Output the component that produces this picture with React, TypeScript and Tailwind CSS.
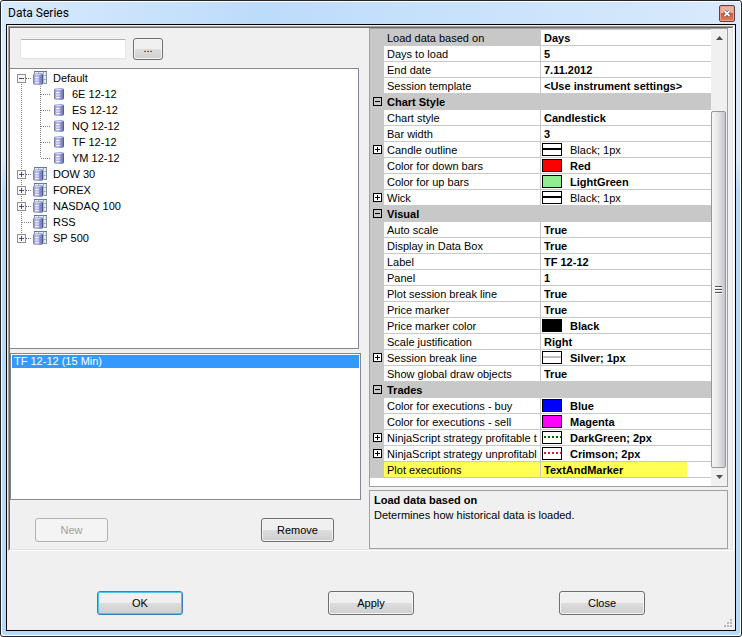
import React from "react";

type Swatch = { fill?: string; line?: string; dotted?: boolean };
type Property = {
  name: string;
  value?: string;
  category?: boolean;
  expandable?: boolean;
  plain?: boolean;
  selected?: boolean;
  highlighted?: boolean;
  swatch?: Swatch;
};

const properties: Property[] = [
  { name: "Load data based on", value: "Days", selected: true },
  { name: "Days to load", value: "5" },
  { name: "End date", value: "7.11.2012" },
  { name: "Session template", value: "<Use instrument settings>" },
  { name: "Chart Style", category: true },
  { name: "Chart style", value: "Candlestick" },
  { name: "Bar width", value: "3" },
  { name: "Candle outline", value: "Black; 1px", expandable: true, plain: true, swatch: { line: "#000000" } },
  { name: "Color for down bars", value: "Red", swatch: { fill: "#ff0000" } },
  { name: "Color for up bars", value: "LightGreen", swatch: { fill: "#90ee90" } },
  { name: "Wick", value: "Black; 1px", expandable: true, plain: true, swatch: { line: "#000000" } },
  { name: "Visual", category: true },
  { name: "Auto scale", value: "True" },
  { name: "Display in Data Box", value: "True" },
  { name: "Label", value: "TF 12-12" },
  { name: "Panel", value: "1" },
  { name: "Plot session break line", value: "True" },
  { name: "Price marker", value: "True" },
  { name: "Price marker color", value: "Black", swatch: { fill: "#000000" } },
  { name: "Scale justification", value: "Right" },
  { name: "Session break line", value: "Silver; 1px", expandable: true, swatch: { line: "#c0c0c0" } },
  { name: "Show global draw objects", value: "True" },
  { name: "Trades", category: true },
  { name: "Color for executions - buy", value: "Blue", swatch: { fill: "#0000ff" } },
  { name: "Color for executions - sell", value: "Magenta", swatch: { fill: "#ff00ff" } },
  { name: "NinjaScript strategy profitable t", value: "DarkGreen; 2px", expandable: true, swatch: { line: "#006400", dotted: true } },
  { name: "NinjaScript strategy unprofitabl", value: "Crimson; 2px", expandable: true, swatch: { line: "#dc143c", dotted: true } },
  { name: "Plot executions", value: "TextAndMarker", highlighted: true },
];

type Node = { name: string; children?: string[]; leaf?: boolean };

const tree: Node[] = [
  { name: "Default", children: ["6E 12-12", "ES 12-12", "NQ 12-12", "TF 12-12", "YM 12-12"] },
  { name: "DOW 30" },
  { name: "FOREX" },
  { name: "NASDAQ 100" },
  { name: "RSS", leaf: true },
  { name: "SP 500" },
];

function SwatchIcon({ fill = "#ffffff", line, dotted }: Swatch) {
  return (
    <svg width="20" height="13" className="block shrink-0" shapeRendering="crispEdges" aria-hidden="true">
      <rect x="0.5" y="0.5" width="19" height="12" fill={fill} stroke="#000" />
      {line && (
        <path d={dotted ? "M2 6H19" : "M1 6H19"} stroke={line} strokeWidth="2" strokeDasharray={dotted ? "2 2" : undefined} />
      )}
    </svg>
  );
}

function GridToggle({ open, label }: { open: boolean; label: string }) {
  return (
    <button type="button" aria-label={(open ? "Collapse " : "Expand ") + label} className="mx-auto block pb-[2px]">
      <svg width="9" height="9" className="block" shapeRendering="crispEdges">
        <rect x="0.5" y="0.5" width="8" height="8" fill={open ? "#c8c8c8" : "#fff"} stroke="#000" />
        <path d={open ? "M2 4.5H7" : "M2 4.5H7M4.5 2V7"} stroke="#000" />
      </svg>
    </button>
  );
}

function InstrumentIcon() {
  return (
    <svg width="10" height="12" className="block shrink-0" aria-hidden="true">
      <path d="M0 1.5Q0 0 5 0T10 1.5V10.5Q10 12 5 12T0 10.5Z" fill="url(#steel)" />
      <path d="M1 1.5Q5 0.5 9 1.5Q5 3 1 1.5Z" fill="#d5daf2" />
      <path d="M2 4.5H6M2 7H6M2 9.5H6" stroke="#f0f2ff" />
      <path d="M0.5 2V10.5" stroke="#7b7fb4" />
      <path d="M9.5 2V10.5" stroke="#575a94" />
    </svg>
  );
}

function GroupIcon() {
  return (
    <svg width="14" height="14" className="block shrink-0" aria-hidden="true">
      <rect x="1.5" y="0.5" width="12" height="12" fill="#dcecf8" stroke="#8a929e" />
      <path d="M1 0.5H14" stroke="#6f7782" />
      <path d="M10.5 1V13M10 4.5H13M10 8.5H13M5.5 1V3" stroke="#a3b3c4" />
      <g transform="translate(0 2)">
        <path d="M0 1.5Q0 0 5 0T10 1.5V10.5Q10 12 5 12T0 10.5Z" fill="url(#steel)" />
        <path d="M1 1.5Q5 0.5 9 1.5Q5 3 1 1.5Z" fill="#d5daf2" />
        <path d="M2 4.5H6M2 7H6M2 9.5H6" stroke="#f0f2ff" />
        <path d="M0.5 2V10.5" stroke="#7b7fb4" />
        <path d="M9.5 2V10.5" stroke="#575a94" />
      </g>
    </svg>
  );
}

function Branch({ up, down, box }: { up: boolean; down: boolean; box?: "plus" | "minus" }) {
  return (
    <svg width="16" height="16" className="block shrink-0" shapeRendering="crispEdges" aria-hidden="true">
      <g stroke="#808080" strokeDasharray="1 1">
        {up && <path d="M4.5 0V8" />}
        {down && <path d="M4.5 8V16" />}
        <path d="M5 8.5H15" />
      </g>
      {box && (
        <>
          <rect x="0.5" y="4.5" width="8" height="8" fill="#f6f6f6" stroke="#919191" />
          <path d={box === "plus" ? "M2 8.5H7M4.5 6V11" : "M2 8.5H7"} stroke="#35509c" />
        </>
      )}
    </svg>
  );
}

function PushButton({ children, className = "", disabled, primary }: { children: React.ReactNode; className?: string; disabled?: boolean; primary?: boolean }) {
  const tone = disabled
    ? "border-[#adb2b5] bg-[#f4f4f4] text-[#a0a0a0]"
    : primary
      ? "border-[#3c7fb1] bg-linear-to-b from-[#f0f0f0] from-50% via-[#dddddd] via-50% to-[#cfcfcf] text-black shadow-[inset_0_0_0_1px_#46c8f0]"
      : "border-[#707070] bg-linear-to-b from-[#f0f0f0] from-50% via-[#dddddd] via-50% to-[#cfcfcf] text-black shadow-[inset_0_0_0_1px_#f4f4f4]";
  return (
    <button type="button" disabled={disabled} className={`flex items-center justify-center rounded-[3px] border ${tone} ${className}`}>
      {children}
    </button>
  );
}

function InstrumentTree() {
  return (
    <ul role="tree" aria-label="Instruments" className="mr-[2px] min-h-[281px] flex-1 border-y border-r border-[#828790] bg-white pt-px pl-[7px] leading-4">
      {tree.map((node, i) => (
        <li key={node.name} role="treeitem" aria-expanded={node.leaf ? undefined : !!node.children}>
          <div className="flex h-4 items-center">
            <Branch up={i > 0} down={i < tree.length - 1} box={node.leaf ? undefined : node.children ? "minus" : "plus"} />
            <GroupIcon />
            <span className="pl-[6px]">{node.name}</span>
          </div>
          {node.children && (
            <ul role="group">
              {node.children.map((child, j) => (
                <li key={child} role="treeitem" className="flex h-4 items-center">
                  <svg width="19" height="16" className="block shrink-0" shapeRendering="crispEdges" aria-hidden="true">
                    <path d="M4.5 0V16" stroke="#808080" strokeDasharray="1 1" />
                  </svg>
                  <Branch up down={j < node.children!.length - 1} />
                  <span className="pl-[2px]"><InstrumentIcon /></span>
                  <span className="pl-2">{child}</span>
                </li>
              ))}
            </ul>
          )}
        </li>
      ))}
    </ul>
  );
}

function PropertyRow({ p }: { p: Property }) {
  if (p.category) {
    return (
      <tr className="h-4 bg-[#c8c8c8]">
        <td className="p-0"><GridToggle open label={p.name} /></td>
        <th colSpan={2} className="p-0 pl-[3px] text-left font-bold">{p.name}</th>
      </tr>
    );
  }
  const labelTone = p.selected ? "bg-[#c8c8c8]" : p.highlighted ? "bg-[#ffff54]" : "bg-white";
  return (
    <tr className="h-4">
      <td className="bg-[#c8c8c8] p-0">{p.expandable && <GridToggle open={false} label={p.name} />}</td>
      <th className={`border-r border-b border-[#c8c8c8] p-0 pl-[3px] text-left font-normal whitespace-nowrap ${labelTone}`}>
        <div className="h-[15px] pt-px">{p.name}</div>
      </th>
      <td className="border-b border-[#c8c8c8] bg-white p-0">
        <div className={`flex h-[15px] items-center whitespace-nowrap ${p.plain ? "" : "font-bold"} ${p.swatch ? "gap-2 pl-px" : "pl-[3px]"} ${p.highlighted ? "w-[146px] bg-[#ffff54]" : ""}`}>
          {p.swatch && <SwatchIcon {...p.swatch} />}
          <span className="h-[15px] pt-px">{p.value}</span>
        </div>
      </td>
    </tr>
  );
}

function ScrollBar() {
  return (
    <div className="flex w-4 shrink-0 flex-col bg-[#f0f0f0]">
      <button type="button" aria-label="Scroll up" className="flex h-[17px] items-center justify-center">
        <svg width="7" height="4"><path d="M0 4L3.5 0L7 4Z" fill="#505050" /></svg>
      </button>
      <div className="flex flex-1 flex-col pt-[65px]">
        <div className="mr-px flex flex-1 items-center justify-center rounded-[2px] border border-[#979797] bg-linear-to-r from-[#f6f6f6] via-[#e4e4e6] to-[#c4c4ca]">
          <svg width="7" height="8" shapeRendering="crispEdges"><path d="M0 0.5H7M0 3.5H7M0 6.5H7" stroke="#505050" /><path d="M0 1.5H7M0 4.5H7M0 7.5H7" stroke="#fff" /></svg>
        </div>
      </div>
      <button type="button" aria-label="Scroll down" className="flex h-[18px] items-center justify-center">
        <svg width="7" height="4"><path d="M0 0L3.5 4L7 0Z" fill="#505050" /></svg>
      </button>
    </div>
  );
}

export default function App() {
  return (
    <main className="flex min-h-screen w-full flex-col rounded-[3px] border border-[#20242c] bg-white p-px font-['Liberation_Sans',Arial,sans-serif] text-[11px] leading-[15px] text-black">
      <svg width="0" height="0" className="absolute" aria-hidden="true">
        <linearGradient id="steel">
          <stop offset="0" stopColor="#8f93c8" />
          <stop offset="0.35" stopColor="#b9bee4" />
          <stop offset="1" stopColor="#6a6db0" />
        </linearGradient>
      </svg>
      <div className="flex flex-1 flex-col rounded-[3px] bg-linear-to-b from-[#d8eafb] from-25% to-[#b9d9f8] to-30% px-1 pb-1">
        <header className="-mx-1 flex h-[22px] shrink-0 items-center justify-between rounded-t-[3px] bg-linear-to-r from-[#d9eafb] via-[#bcdcfb] via-35% to-[#d9eafb] pr-[5px] pl-[6px]">
          <h1 className="font-[Roboto,'Liberation_Sans',sans-serif] text-[12px]">Data Series</h1>
          <button type="button" aria-label="Close window" className="flex h-[17px] w-4 items-center justify-center rounded-[2px] border border-[#6b3a3a] bg-linear-to-b from-[#eab0a0] from-45% via-[#cd5a42] via-50% to-[#d5805f] shadow-[inset_0_0_0_1px_#e8a08c]">
            <svg width="8" height="7"><path d="M1.5 1L6.5 6M6.5 1L1.5 6" stroke="#4a3a44" strokeWidth="3" /><path d="M1.5 1L6.5 6M6.5 1L1.5 6" stroke="#fff" strokeWidth="1.8" /></svg>
          </button>
        </header>
        <div className="flex flex-1 flex-col border border-black bg-[#f0f0f0]">
          <div className="mx-px mt-px flex flex-1 flex-col border border-t-[#a0a0a0] border-r-white border-b-white border-l-[#a0a0a0]">
            <div className="flex flex-1 gap-2 border border-t-[#696969] border-r-[#e3e3e3] border-b-[#e3e3e3] border-l-[#696969] pr-1">
              <section className="flex min-w-0 flex-1 flex-col">
                <div className="flex h-10 shrink-0 items-center gap-[7px] pt-px pl-[10px]">
                  <input type="text" aria-label="Search instruments" className="h-5 w-[106px] rounded-[2px] border border-[#e2e3ea] border-t-[#abadb3] bg-white px-1" />
                  <PushButton className="h-[22px] w-[30px]">...</PushButton>
                </div>
                <InstrumentTree />
                <ul role="listbox" aria-label="Data series" className="mt-1 h-[147px] border border-[#828790] bg-white p-px">
                  <li role="option" aria-selected="true" className="h-[13px] bg-[#3399ff] pl-[2px] leading-[13px] text-white">TF 12-12 (15 Min)</li>
                </ul>
                <div className="flex justify-between pt-[18px] pr-[27px] pb-[7px] pl-[25px]">
                  <PushButton disabled className="h-6 w-[73px]">New</PushButton>
                  <PushButton className="h-6 w-[73px]">Remove</PushButton>
                </div>
              </section>
              <section className="flex w-[359px] shrink-0 flex-col gap-[3px]">
                <div className="flex flex-1 border border-[#a0a0a0] bg-white">
                  <div className="flex-1 border-t border-[#c8c8c8]">
                    <table className="w-full table-fixed border-separate border-spacing-0">
                      <colgroup>
                        <col className="w-[14px]" />
                        <col className="w-[157px]" />
                        <col />
                      </colgroup>
                      <tbody>
                        {properties.map((p) => <PropertyRow key={p.name} p={p} />)}
                      </tbody>
                    </table>
                  </div>
                  <ScrollBar />
                </div>
                <div className="h-[59px] border border-[#a0a0a0] px-1 pt-[2px]">
                  <h2 className="font-bold">Load data based on</h2>
                  <p>Determines how historical data is loaded.</p>
                </div>
              </section>
            </div>
          </div>
          <footer className="relative flex shrink-0 justify-between px-[90px] pt-10 pb-[15px]">
            <PushButton primary className="h-6 w-[86px]">OK</PushButton>
            <PushButton className="h-6 w-[86px]">Apply</PushButton>
            <PushButton className="h-6 w-[86px]">Close</PushButton>
            <svg width="8" height="8" className="absolute right-[3px] bottom-[3px]" shapeRendering="crispEdges" aria-hidden="true">
              <path d="M6 0h2v2h-2zM3 3h2v2h-2zM6 3h2v2h-2zM0 6h2v2h-2zM3 6h2v2h-2zM6 6h2v2h-2z" fill="#b8b8b8" />
            </svg>
          </footer>
        </div>
      </div>
    </main>
  );
}
